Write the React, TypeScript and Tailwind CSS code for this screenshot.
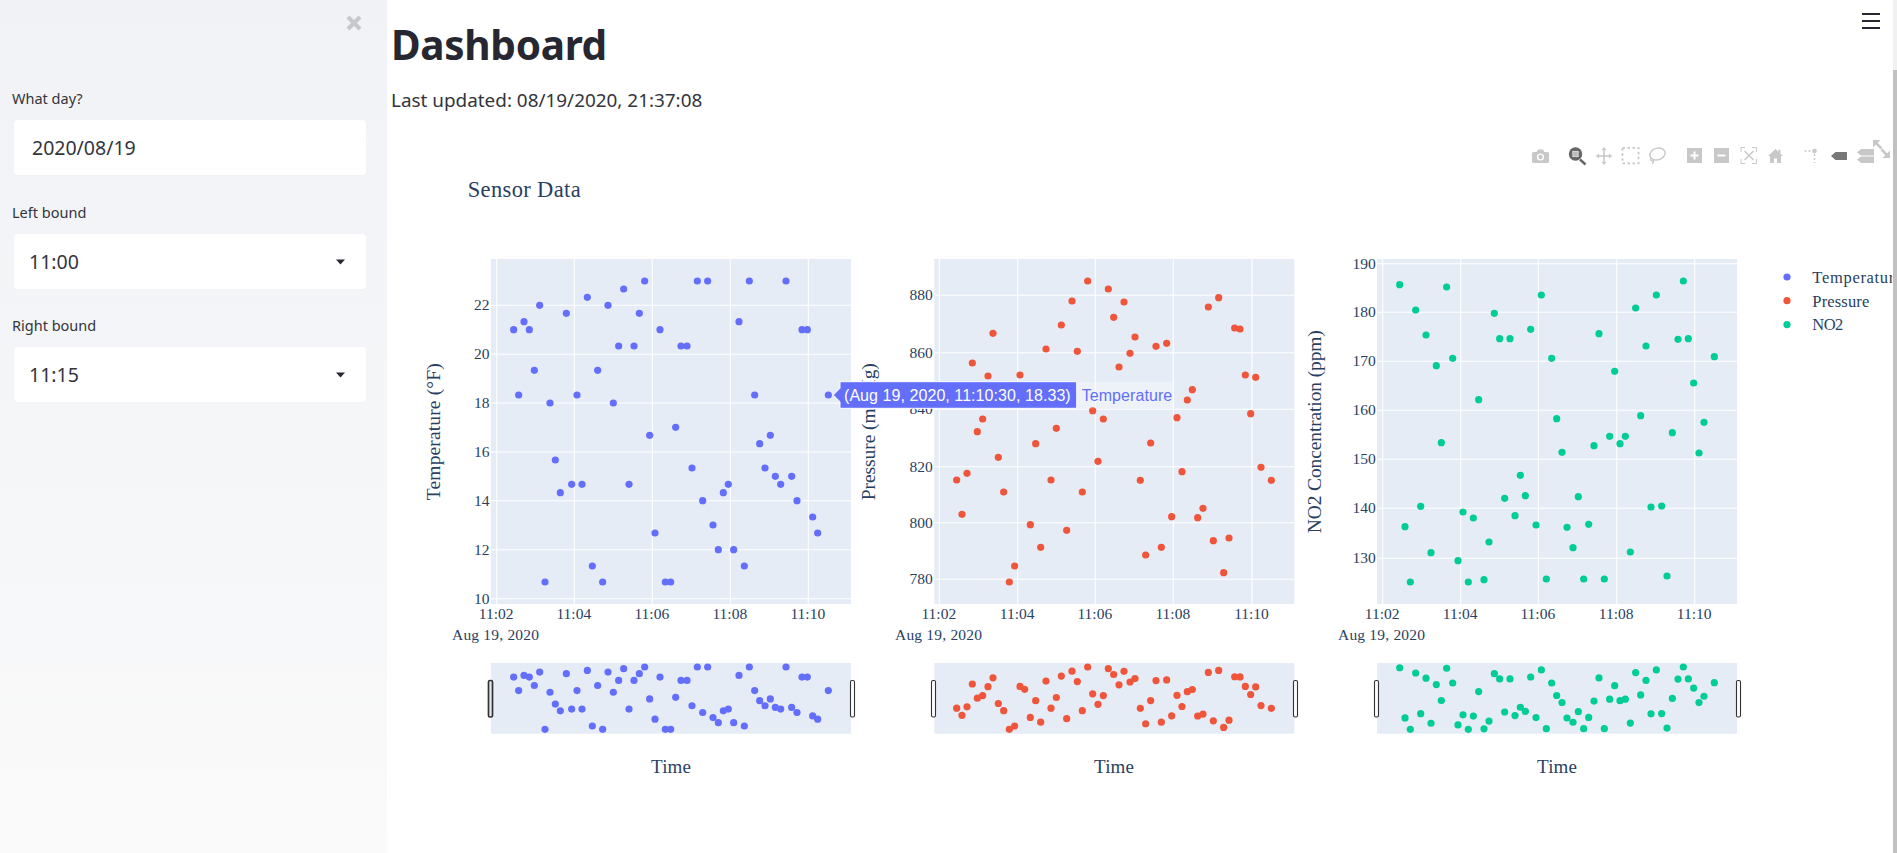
const INK = "#2a3f5f";
const SERIF = "'Liberation Serif', serif";

// point positions read off the chart, [x, y] in 3x crop pixels
const tempPoints = [[281,239],[296,435],[312,215],[328,239],[343,361],[359,166],[375,996],[390,459],[406,630],[421,728],[439,190],[455,703],[471,435],[486,703],[502,142],[517,948],[533,361],[548,996],[564,166],[580,459],[596,288],[611,117],[627,703],[642,288],[658,190],[674,93],[689,556],[705,849],[720,239],[736,996],[752,996],[767,532],[783,288],[801,288],[816,654],[832,93],[848,752],[863,93],[879,825],[895,899],[910,728],[925,703],[941,899],[957,215],[973,948],[988,93],[1004,435],[1019,581],[1035,654],[1051,556],[1066,679],[1082,703],[1098,93],[1115,679],[1131,752],[1146,239],[1162,239],[1178,801],[1193,849],[1225,435]];
const pressurePoints = [[290,690],[306,793],[321,670],[337,339],[352,545],[368,507],[384,378],[399,250],[415,622],[431,726],[448,996],[464,948],[480,375],[494,416],[511,824],[527,581],[542,892],[558,297],[573,690],[589,535],[604,225],[620,841],[636,153],[652,304],[667,726],[683,93],[698,482],[714,634],[730,507],[745,117],[761,202],[777,351],[792,156],[810,310],[825,261],[841,691],[857,915],[872,579],[888,289],[904,892],[920,280],[935,800],[951,503],[966,665],[982,450],[997,419],[1013,803],[1029,775],[1045,171],[1060,872],[1076,143],[1091,968],[1107,864],[1124,234],[1140,237],[1156,375],[1172,491],[1187,382],[1203,652],[1234,691]];
const no2Points = [[299,104],[315,830],[331,996],[347,180],[362,769],[378,255],[393,908],[409,347],[424,578],[440,111],[458,325],[474,932],[489,786],[505,996],[520,804],[536,449],[552,989],[567,876],[583,190],[599,266],[614,745],[630,266],[645,797],[661,676],[676,737],[692,238],[708,825],[724,135],[739,987],[755,325],[770,506],[786,607],[801,832],[819,893],[835,740],[851,987],[866,823],[882,587],[897,251],[913,987],[929,559],[944,364],[960,581],[976,559],[991,906],[1007,174],[1022,497],[1038,288],[1053,771],[1069,135],[1085,768],[1101,978],[1117,548],[1134,268],[1150,93],[1165,266],[1181,399],[1197,609],[1212,517],[1243,320]];

const panels = [
  {
    left: 491, cropX: 420, color: "#636efa", points: tempPoints, tickEnd: 489.5, dateX: 452,
    title: "Temperature (°F)", titleX: 440, titleLen: 137, timeX: 671,
    vGrid: [496.7, 574.3, 652.3, 730.3, 808.3],
    hGrid: [[305.3,"22"],[354.3,"20"],[403,"18"],[452,"16"],[500.7,"14"],[549.7,"12"],[598.7,"10"]],
  },
  {
    left: 934.3, cropX: 860, color: "#ef553b", points: pressurePoints, tickEnd: 932.7, dateX: 895,
    title: "Pressure (mmHg)", titleX: 875, titleLen: 137, timeX: 1114,
    vGrid: [939.3, 1017.7, 1095.3, 1173.3, 1252],
    hGrid: [[295.3,"880"],[352.7,"860"],[409.3,"840"],[466.7,"820"],[522.7,"800"],[579.3,"780"]],
  },
  {
    left: 1377, cropX: 1300, color: "#00cc96", points: no2Points, tickEnd: 1375.7, dateX: 1338,
    title: "NO2 Concentration (ppm)", titleX: 1320.7, titleLen: 203, timeX: 1557,
    vGrid: [1382.7, 1460.7, 1538.3, 1616.7, 1694.7],
    hGrid: [[263.7,"190"],[312.3,"180"],[361.3,"170"],[410.3,"160"],[459.3,"150"],[508.3,"140"],[558.3,"130"]],
  },
];

const xTicks = ["11:02", "11:04", "11:06", "11:08", "11:10"];

function Handle({ x, heavy }: { x: number; heavy?: boolean }) {
  return (
    <rect
      x={Math.round(x) + 0.5}
      y={680.5}
      width={4}
      height={36.5}
      rx={1.5}
      fill={heavy ? "#e8e8e8" : "#fff"}
      stroke="#333"
      strokeWidth={heavy ? 1.7 : 1.1}
    />
  );
}

function Panel({ panel }: { panel: (typeof panels)[number] }) {
  const { left, cropX, color, points } = panel;
  const right = left + 360;
  return (
    <g fontFamily={SERIF} fill={INK}>
      <rect x={left} y={259} width={360} height={345} fill="#e5ecf6" />
      {panel.vGrid.map((x) => (
        <line key={x} x1={x} x2={x} y1={259} y2={604} stroke="#fff" strokeWidth={1.1} />
      ))}
      {panel.hGrid.map(([y]) => (
        <line key={y} x1={left} x2={right} y1={y} y2={y} stroke="#fff" strokeWidth={1.1} />
      ))}
      {panel.hGrid.map(([y, label]) => (
        <text key={label} x={panel.tickEnd} y={Number(y) + 5} textAnchor="end" fontSize={15.5}>{label}</text>
      ))}
      {panel.vGrid.map((x, i) => (
        <text key={x} x={x - 0.5} y={619} textAnchor="middle" fontSize={15.5}>{xTicks[i]}</text>
      ))}
      <text x={panel.dateX} y={640} fontSize={15.5} textLength={87}>Aug 19, 2020</text>
      <text
        transform={`translate(${panel.titleX} 431.7) rotate(-90)`}
        textAnchor="middle"
        fontSize={19.5}
        textLength={panel.titleLen}
      >
        {panel.title}
      </text>
      {points.map(([x, y]) => (
        <circle key={x} cx={cropX + x / 3} cy={250 + y / 3} r={3.6} fill={color} />
      ))}

      <rect x={left} y={663} width={360} height={70.7} fill="#e5ecf6" />
      {points.map(([x, y]) => (
        <circle key={x} cx={cropX + x / 3} cy={600 + (201 + (y - 93) * 0.2071) / 3} r={3.6} fill={color} />
      ))}
      <Handle x={left - 3} heavy={left === 491} />
      <Handle x={right - 1.5} />
      <text x={panel.timeX} y={772.7} textAnchor="middle" fontSize={19} textLength={40}>Time</text>
    </g>
  );
}

function ModeBar() {
  const idle = "#c8c8c8";
  return (
    <g>
      {/* camera */}
      <path d="M1532 153.500a1.500 1.500 0 0 1 1.500-1.500h3l1.500-2.500h5l1.500 2.500h3a1.500 1.500 0 0 1 1.500 1.500v8a1.500 1.500 0 0 1-1.500 1.500h-14a1.500 1.500 0 0 1-1.500-1.500z" fill={idle} />
      <circle cx={1540.500} cy={157} r={3.6} fill="#fff" />
      <circle cx={1540.500} cy={157} r={2.2} fill={idle} />
      {/* zoom, active */}
      <circle cx={1575.500} cy={154} r={6.700} fill="#666" />
      <rect x={1572.800} y={151.300} width={5.400} height={5.400} fill="#bbb" stroke="#eee" strokeWidth={0.7} />
      <path d="M1580 159.500l5.500 5" stroke="#666" strokeWidth={2.4} />
      {/* pan */}
      <path d="M1604 148v16M1596.500 156h15" stroke={idle} strokeWidth={1.6} />
      <path d="M1604 147l-2.500 3h5zM1604 165l-2.500-3h5zM1596 156l3-2.500v5zM1612 156l-3-2.500v5z" fill={idle} />
      {/* box select */}
      <rect x={1622.500} y={147.800} width={16} height={15.500} fill="none" stroke={idle} strokeWidth={1.800} strokeDasharray="2.500 2.500" />
      {/* lasso */}
      <ellipse cx={1657.500} cy={154} rx={7.800} ry={5.800} fill="none" stroke={idle} strokeWidth={1.400} transform="rotate(-15 1657.500 154)" />
      <path d="M1651 158c-1.500 2 .5 3.500 2 2.500s0 3-1 3.500" fill="none" stroke={idle} strokeWidth={1.300} />
      {/* zoom in */}
      <rect x={1687} y={148} width={15} height={15} fill={idle} />
      <path d="M1694.500 151.500v8M1690.500 155.500h8" stroke="#fff" strokeWidth={2} />
      {/* zoom out */}
      <rect x={1714} y={148} width={15} height={15} fill={idle} />
      <path d="M1717.500 155.500h8" stroke="#fff" strokeWidth={2} />
      {/* autoscale */}
      <path d="M1741 152v-4.500h4M1752 147.500h4.500v4.500M1756.500 159v4.500h-4.500M1745 163.500h-4v-4.500" fill="none" stroke={idle} strokeWidth={1} />
      <path d="M1744.500 151l9 9M1753.500 151l-9 9" stroke={idle} strokeWidth={1.400} />
      {/* home */}
      <path d="M1768 156l7.500-7 3 2.800v-2h2v3.900l2.500 2.300h-2v7h-4v-4.500h-3v4.500h-4v-7z" fill={idle} />
      {/* spike lines */}
      <path d="M1804.500 151h7" stroke={idle} strokeWidth={1.500} strokeDasharray="2 2" />
      <circle cx={1814.500} cy={151} r={2.300} fill={idle} />
      <path d="M1814.500 154v9" stroke={idle} strokeWidth={1.500} strokeDasharray="2 2" />
      {/* hover closest, active */}
      <path d="M1831 156l4.500-4h11.500v8h-11.500z" fill="#777" />
      {/* hover compare */}
      <path d="M1857 152.500l4-3.500h13v6.500h-13zM1857 159.500l4-3h13v6.500h-13z" fill={idle} />
      {/* fullscreen */}
      <path d="M1873 140h7.500l-7.500 7.500zM1890 158h-7.500l7.500-7.500z" fill={idle} />
      <path d="M1876 143l5.500 5.500M1887 155l-5.500-5.500" stroke={idle} strokeWidth={2.500} />
    </g>
  );
}

function SensorFigure() {
  return (
    <svg viewBox="387 130 1505 650" width={1505} height={650} className="block shrink-0">
      <ModeBar />
      <text x={467.7} y={196.7} fontFamily={SERIF} fontSize={22.5} fill={INK} textLength={113}>Sensor Data</text>
      {panels.map((panel) => (
        <Panel key={panel.title} panel={panel} />
      ))}
      <g fontFamily={SERIF} fontSize={16.5} fill={INK}>
        <circle cx={1787} cy={277} r={3.6} fill="#636efa" />
        <circle cx={1787} cy={300.7} r={3.6} fill="#ef553b" />
        <circle cx={1787} cy={324.6} r={3.6} fill="#00cc96" />
        <text x={1812.3} y={282.7} textLength={90}>Temperature</text>
        <text x={1812.3} y={306.5} textLength={57}>Pressure</text>
        <text x={1812.3} y={330} textLength={31}>NO2</text>
      </g>
      {/* hover label */}
      <g fontFamily="'Liberation Sans', sans-serif" fontSize={16}>
        <rect x={1077} y={381.7} width={96} height={26.6} fill="#fff" fillOpacity={0.3} />
        <path d="M833.300 395l6.700-6.700v-6.600h236.700v26.600H840v-6.600z" fill="#636efa" stroke="#fff" strokeWidth={1} />
        <text x={844} y={401.2} fill="#fff" textLength={226.700}>(Aug 19, 2020, 11:10:30, 18.33)</text>
        <text x={1081.7} y={401.2} fill="#636efa" textLength={90.500}>Temperature</text>
      </g>
    </svg>
  );
}

function Caret() {
  return (
    <svg width={9} height={6} viewBox="0 0 9 6" className="shrink-0">
      <path d="M0 0.5h9L4.500 5.500z" fill="#262730" />
    </svg>
  );
}

function Field({ label, value, select, className }: { label: string; value: string; select?: boolean; className?: string }) {
  return (
    <div className={`flex flex-col ${className ?? ""}`}>
      <label className="h-[21px] text-[14.5px] leading-[21px] text-[#33343c]">{label}</label>
      <div className={`mt-[11px] ml-[2px] flex h-[55px] items-center justify-between rounded-[3px] bg-white shadow-[0_0_1px_#e3e5ea] ${select ? "pl-[15px] pr-[21px]" : "pl-[18px]"}`}>
        <span className="text-[19.5px] text-[#33343c]">{value}</span>
        {select ? <Caret /> : null}
      </div>
    </div>
  );
}

export default function App() {
  return (
    <div className="flex h-[853px] w-[1897px] overflow-hidden bg-white font-['Noto_Sans',sans-serif] text-[#262730]">
      <aside className="flex w-[387px] shrink-0 flex-col bg-linear-to-b from-[#f0f2f6] to-[#fafafa] pl-[12px] pr-[21px]">
        <div className="flex h-[88px] justify-end pr-[4px] pt-[15px]">
          <svg width={16} height={16} viewBox="0 0 16 16">
            <path d="M2 2l12 12M14 2L2 14" stroke="#c6c8cb" strokeWidth={4} />
          </svg>
        </div>
        <div className="flex flex-col">
          <Field label="What day?" value="2020/08/19" className="mb-[27px]" />
          <Field label="Left bound" value="11:00" select className="mb-[26px]" />
          <Field label="Right bound" value="11:15" select />
        </div>
      </aside>

      <main className="flex min-w-0 flex-1 flex-col">
        <div className="flex h-[130px] shrink-0 justify-between pl-[4px] pr-[13px]">
          <div>
            <h1 className="pt-[16px] text-[40.5px] font-bold leading-[58px] tracking-[-0.3px] text-[#262730]">Dashboard</h1>
            <p className="mt-[13px] text-[18.9px] leading-[26px] text-[#33343c]">Last updated: 08/19/2020, 21:37:08</p>
          </div>
          <div className="flex h-fit flex-col gap-[5px] pt-[13px]">
            <span className="block h-[2px] w-[18px] bg-[#262730]" />
            <span className="block h-[2px] w-[18px] bg-[#262730]" />
            <span className="block h-[2px] w-[18px] bg-[#262730]" />
          </div>
        </div>
        <SensorFigure />
      </main>

      <div className="flex w-[4px] shrink-0 flex-col bg-[#f1f1f1] pt-[70px]">
        <div className="flex-1 bg-[#c1c1c1]" />
      </div>
    </div>
  );
}
